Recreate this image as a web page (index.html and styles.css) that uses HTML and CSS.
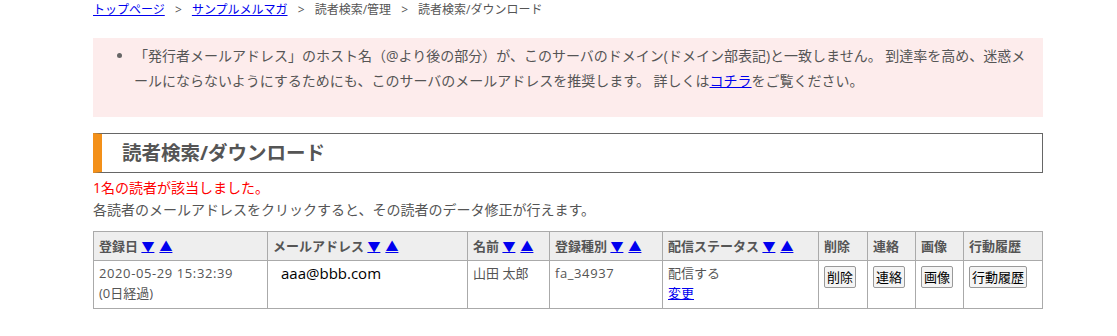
FILE: index.html
```html
<!DOCTYPE html>
<html lang="ja">
<head>
  <meta charset="UTF-8" />
  <title>読者検索/ダウンロード</title>
  <link rel="stylesheet" href="styles.css">
</head>
<body>
<div class="wrap">

  <div class="breadcrumb">
    <a href="#">トップページ</a> &gt; <a href="#">サンプルメルマガ</a> &gt; 読者検索/管理 &gt; 読者検索/ダウンロード
  </div>

  <div class="notice">
    <ul>
      <li>「発行者メールアドレス」のホスト名（@より後の部分）が、このサーバのドメイン(ドメイン部表記)と一致しません。 到達率を高め、迷惑メールにならないようにするためにも、このサーバのメールアドレスを推奨します。 詳しくは<a href="#">コチラ</a>をご覧ください。</li>
    </ul>
  </div>

  <h2 class="title">読者検索/ダウンロード</h2>

  <p class="hit">1名の読者が該当しました。</p>
  <p class="info">各読者のメールアドレスをクリックすると、その読者のデータ修正が行えます。</p>

  <table class="readers">
    <colgroup>
      <col style="width:174px">
      <col style="width:200px">
      <col style="width:82px">
      <col style="width:113px">
      <col style="width:156px">
      <col style="width:49px">
      <col style="width:48px">
      <col style="width:48px">
      <col>
    </colgroup>
    <thead>
      <tr>
        <th>登録日 <a class="sort" href="#">▼</a><a class="sort" href="#">▲</a></th>
        <th>メールアドレス <a class="sort" href="#">▼</a><a class="sort" href="#">▲</a></th>
        <th>名前 <a class="sort" href="#">▼</a><a class="sort" href="#">▲</a></th>
        <th>登録種別 <a class="sort" href="#">▼</a><a class="sort" href="#">▲</a></th>
        <th>配信ステータス <a class="sort" href="#">▼</a><a class="sort" href="#">▲</a></th>
        <th>削除</th>
        <th>連絡</th>
        <th>画像</th>
        <th>行動履歴</th>
      </tr>
    </thead>
    <tbody>
      <tr>
        <td><span class="num">2020-05-29 15:32:39</span><br>(0日経過)</td>
        <td><span class="email">aaa@bbb.com</span></td>
        <td>山田 太郎</td>
        <td><span class="num">fa_34937</span></td>
        <td>配信する<br><a href="#">変更</a></td>
        <td><button>削除</button></td>
        <td><button>連絡</button></td>
        <td><button>画像</button></td>
        <td><button>行動履歴</button></td>
      </tr>
    </tbody>
  </table>

</div>
</body>
</html>
```

FILE: styles.css
```css
html, body {
  margin: 0;
  padding: 0;
  background: #fff;
  font-family: "Open Sans", "Noto Sans CJK JP", sans-serif;
  color: #555;
}

a {
  color: #0000ee;
}

.wrap {
  width: 950px;
  margin-left: 93px;
  padding-top: 1px;
}

.breadcrumb {
  font-size: 12px;
  line-height: 18px;
  color: #555;
  word-spacing: 7px;
}

.notice {
  margin-top: 19px;
  background: #fdecec;
  padding: 5px 0 24px;
}

.notice ul {
  margin: 0;
  padding-left: 41px;
  padding-right: 8px;
}

.notice li {
  font-size: 14px;
  line-height: 25px;
}

.notice li::marker {
  color: #666;
}

.title {
  margin: 16px 0 0;
  height: 38px;
  border: 1px solid #666;
  border-left: 9px solid #f39019;
  padding-left: 20px;
  font-size: 19.5px;
  font-weight: bold;
  line-height: 38px;
  color: #555;
}

.hit {
  margin: 4px 0 0;
  font-size: 14px;
  line-height: 22px;
  color: #ff0000;
}

.info {
  margin: 0;
  font-size: 14px;
  line-height: 22px;
  color: #555;
}

.readers {
  margin-top: 10px;
  width: 950px;
  border-collapse: collapse;
  table-layout: fixed;
  font-size: 13px;
}

.readers th,
.readers td {
  border: 1px solid #aaa;
  text-align: left;
  vertical-align: top;
  padding: 0 5px;
  white-space: nowrap;
  overflow: hidden;
}

.readers th {
  background: #eee;
  font-weight: bold;
  height: 28px;
  line-height: 28px;
  vertical-align: middle;
}

.sort {
  font-weight: normal;
}

.sort + .sort {
  margin-left: 5px;
}

.readers td {
  height: 38px;
  padding-top: 2px;
  padding-bottom: 5px;
  line-height: 20px;
}

.num {
  letter-spacing: 0.6px;
}

.email {
  display: inline-block;
  margin-left: 8px;
  font-size: 15px;
  color: #000;
}

.readers button {
  margin-top: 3px;
  font-family: "Noto Sans CJK JP", sans-serif;
  font-size: 13px;
  line-height: 18px;
  padding: 1px 2px;
  color: #000;
  background: #f4f4f4;
  border: 1px solid #999;
  border-radius: 2px;
}
```
